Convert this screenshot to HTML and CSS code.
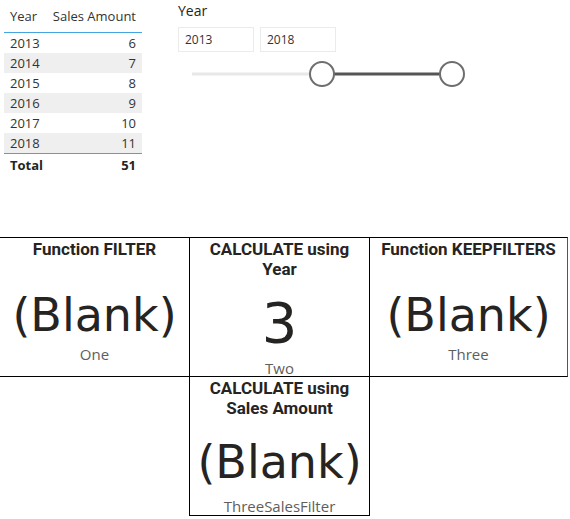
FILE: index.html
```html
<!DOCTYPE html>
<html>
<head>
<meta charset="utf-8">
<link rel="stylesheet" href="styles.css">
</head>
<body>
<div class="page">
  <div class="top">
    <table class="matrix">
      <thead>
        <tr><th class="c-year">Year</th><th class="c-amt">Sales Amount</th></tr>
      </thead>
      <tbody>
        <tr><td class="c-year">2013</td><td class="c-amt">6</td></tr>
        <tr class="alt"><td class="c-year">2014</td><td class="c-amt">7</td></tr>
        <tr><td class="c-year">2015</td><td class="c-amt">8</td></tr>
        <tr class="alt"><td class="c-year">2016</td><td class="c-amt">9</td></tr>
        <tr><td class="c-year">2017</td><td class="c-amt">10</td></tr>
        <tr class="alt"><td class="c-year">2018</td><td class="c-amt">11</td></tr>
      </tbody>
      <tfoot>
        <tr><td class="c-year">Total</td><td class="c-amt">51</td></tr>
      </tfoot>
    </table>
    <div class="slicer">
      <div class="slicer-title">Year</div>
      <div class="range-inputs">
        <div class="range-box">2013</div>
        <div class="range-box">2018</div>
      </div>
      <svg class="slider" width="300" height="30" viewBox="0 0 300 30">
        <line x1="14" y1="14" x2="132" y2="14" stroke="#e8e8e8" stroke-width="3"/>
        <line x1="156" y1="14" x2="262" y2="14" stroke="#555555" stroke-width="3"/>
        <circle cx="144" cy="14" r="12" fill="#ffffff" stroke="#6e6e6e" stroke-width="2"/>
        <circle cx="274" cy="14" r="12" fill="#ffffff" stroke="#6e6e6e" stroke-width="2"/>
      </svg>
    </div>
  </div>
  <div class="cards">
    <div class="card card-1">
      <div class="card-title">Function FILTER</div>
      <div class="card-value">(Blank)</div>
      <div class="card-label">One</div>
    </div>
    <div class="card card-2">
      <div class="card-title">CALCULATE using<br>Year</div>
      <div class="card-value big">3</div>
      <div class="card-label">Two</div>
    </div>
    <div class="card card-3">
      <div class="card-title">Function KEEPFILTERS</div>
      <div class="card-value">(Blank)</div>
      <div class="card-label">Three</div>
    </div>
    <div class="card card-4">
      <div class="card-title">CALCULATE using<br>Sales Amount</div>
      <div class="card-value">(Blank)</div>
      <div class="card-label">ThreeSalesFilter</div>
    </div>
  </div>
</div>
</body>
</html>
```
FILE: styles.css
```css
html, body {
  margin: 0;
  padding: 0;
  background: #ffffff;
}
.page {
  width: 570px;
  height: 519px;
  overflow: hidden;
  font-family: "Open Sans", "Noto Sans", sans-serif;
  color: #252423;
}
.top {
  height: 237px;
  display: flex;
  align-items: flex-start;
}
.matrix {
  flex: none;
  margin-left: 4px;
  width: 138px;
  border-collapse: collapse;
  font-size: 13px;
  color: #333333;
}
.matrix th {
  font-weight: 400;
  height: 32px;
  padding: 0 6px;
  border-bottom: 1px solid #45a5e0;
  vertical-align: middle;
  white-space: nowrap;
}
.matrix td {
  height: 20px;
  padding: 0 6px;
  vertical-align: middle;
  line-height: 20px;
}
.matrix .c-year { text-align: left; }
.matrix .c-amt { text-align: right; padding-left: 0; }
.matrix tbody tr:last-child td { border-bottom: 1px solid #45a5e0; }
.matrix tr.alt td { background: #efefef; }
.matrix tfoot td {
  font-weight: 700;
  height: 22px;
  color: #252423;
}
.slicer {
  margin-left: 36px;
  padding-top: 2px;
}
.slicer-title {
  font-size: 14px;
  line-height: 18px;
  color: #252423;
}
.range-inputs {
  display: flex;
  gap: 6px;
  margin-top: 7px;
}
.range-box {
  box-sizing: border-box;
  width: 76px;
  height: 25px;
  border: 1px solid #ebebeb;
  padding-left: 6px;
  font-size: 12px;
  line-height: 23px;
  color: #333333;
}
.slider {
  display: block;
  margin-top: 8px;
}
.cards {
  display: grid;
  grid-template-columns: 190px 180px 198px;
  grid-template-rows: 140px 139px;
}
.card {
  box-sizing: border-box;
  border-color: #000000;
  border-style: solid;
  border-width: 0;
  display: flex;
  flex-direction: column;
  align-items: center;
  overflow: hidden;
  background: #ffffff;
}
.card-1 { border-width: 1px 1px 1px 0; }
.card-2 { border-width: 1px 1px 1px 0; }
.card-3 { border-width: 1px 1px 1px 0; border-right-color: #555555; }
.card-4 {
  grid-column: 2;
  grid-row: 2;
  margin-left: -1px;
  border-width: 0 1px 1px 1px;
}
.card-title {
  font-family: "Roboto", "DejaVu Sans", sans-serif;
  font-weight: 700;
  font-size: 17px;
  line-height: 20px;
  text-align: center;
  padding-top: 1px;
  color: #252423;
  flex: none;
}
.card-value {
  font-family: "DejaVu Sans", sans-serif;
  font-size: 46px;
  line-height: 52px;
  color: #252423;
  flex: none;
  margin-top: 30px;
}
.card-value.big {
  font-size: 56px;
  line-height: 60px;
  margin-top: 14px;
}
.card-4 .card-value { margin-top: 18px; }
.card-label {
  font-family: "Open Sans", sans-serif;
  font-size: 15px;
  line-height: 18px;
  color: #605e5c;
  flex: none;
  margin-top: 4px;
}
.card-2 .card-label { margin-top: 6px; }
.card-4 .card-label { margin-top: 9px; }
```
